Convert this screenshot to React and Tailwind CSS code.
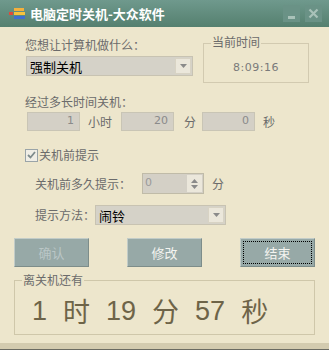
import React from "react";

const cjk = { fontFamily: '"Noto Sans CJK SC", "Noto Sans", sans-serif' };

const Arrow = () => (
  <div className="flex items-center justify-center w-[16px] h-[16px] bg-[#ebe7db] border border-[#d8d3c4]">
    <svg width="7" height="4" viewBox="0 0 7 4">
      <path d="M0 0 L7 0 L3.5 4 Z" fill="#8a8a8a" />
    </svg>
  </div>
);

const Combo = ({ text, className }) => (
  <div
    className={
      "flex items-center justify-between h-[20px] bg-[#d5d2c8] border border-[#c8c3b2] pl-[3px] pr-[1px] " +
      className
    }
  >
    <span className="text-[13px] leading-none text-black" style={cjk}>
      {text}
    </span>
    <Arrow />
  </div>
);

const NumBox = ({ value, className }) => (
  <div
    className={
      "flex items-center justify-end h-[19px] bg-[#d4d0c6] border border-[#c9c5b5] pr-[5px] text-[11px] text-[#8a8a8a] " +
      className
    }
    style={{ fontFamily: '"DejaVu Sans", sans-serif' }}
  >
    {value}
  </div>
);

const Btn = ({ label, disabled, focused }) => (
  <div className="w-[75px] h-[29px] bg-[#97a9a7] border border-t-[#c2ccc8] border-l-[#c2ccc8] border-b-[#7d8d8a] border-r-[#7d8d8a] p-[2px]">
    <div
      className={
        "w-full h-full flex items-center justify-center text-[13px] " +
        (focused ? "border border-dotted border-black " : "") +
        (disabled ? "text-[#bac6c6]" : "text-[#f4f4f0]")
      }
      style={cjk}
    >
      {label}
    </div>
  </div>
);

export default function App() {
  return (
    <div className="w-[329px] h-[350px] bg-[#ede6cc] flex flex-col overflow-hidden select-none" style={cjk}>
      {/* title bar */}
      <div className="h-[27px] flex items-center bg-gradient-to-b from-[#6f998d] to-[#55806f] pl-[9px] pr-[7px]">
        <div className="flex flex-col gap-[1px] w-[16px]">
          <div className="h-[3px] w-[10px] ml-[5px] bg-[#f4b03c]" />
          <div className="flex gap-[1px]">
            <div className="h-[3px] w-[4px] bg-[#e04a3a]" />
            <div className="h-[3px] w-[11px] bg-[#f6c23e]" />
          </div>
          <div className="h-[3px] w-[11px] ml-[5px] bg-[#3f6fd0]" />
        </div>
        <span className="ml-[5px] text-[13px] font-bold text-white whitespace-nowrap">
          电脑定时关机-大众软件
        </span>
        <div className="ml-auto flex gap-[5px]">
          <div className="w-[17px] h-[17px] bg-[#6a9286] flex items-end justify-center pb-[3px]">
            <div className="w-[7px] h-[3px] bg-[#a9c2b9]" />
          </div>
          <div className="w-[17px] h-[17px] bg-[#6a9286] flex items-center justify-center">
            <svg width="11" height="11" viewBox="0 0 11 11">
              <path d="M1.5 1.5 L9.5 9.5 M9.5 1.5 L1.5 9.5" stroke="#a9c2b9" strokeWidth="2.2" />
            </svg>
          </div>
        </div>
      </div>

      {/* body */}
      <div className="flex-1 flex flex-col text-[12px] text-[#6b6b6b] whitespace-nowrap">
        <div className="flex pt-[9px]">
          <div className="ml-[25px] w-[168px]">
            <div className="leading-[18px]">您想让计算机做什么：</div>
            <Combo text="强制关机" className="mt-[2px] w-[167px] ml-[1px]" />
          </div>
          <div className="ml-[10px] mt-[7px] relative w-[106px] h-[40px] border border-[#d2cab0]">
            <span className="absolute -top-[10px] left-[7px] px-[1px] bg-[#ede6cc] leading-[16px]">
              当前时间
            </span>
            <div
              className="pt-[16px] text-center text-[11px] tracking-[0.5px] text-[#7a7a7a]"
              style={{ fontFamily: '"DejaVu Sans", sans-serif' }}
            >
              8:09:16
            </div>
          </div>
        </div>

        <div className="ml-[25px] mt-[10px] leading-[18px]">经过多长时间关机：</div>
        <div className="flex items-center ml-[27px] mt-[1px]">
          <NumBox value="1" className="w-[53px]" />
          <span className="ml-[8px] w-[33px]">小时</span>
          <NumBox value="20" className="w-[53px]" />
          <span className="ml-[10px] w-[18px]">分</span>
          <NumBox value="0" className="w-[53px]" />
          <span className="ml-[8px]">秒</span>
        </div>

        <div className="flex items-center ml-[25px] mt-[16px]">
          <div className="w-[13px] h-[13px] bg-[#f0eee6] border border-[#9aa4a8] flex items-center justify-center">
            <svg width="9" height="8" viewBox="0 0 9 8">
              <path d="M1 4 L3.5 6.5 L8 1" stroke="#7e8b8c" strokeWidth="1.8" fill="none" />
            </svg>
          </div>
          <span className="ml-[1px] leading-[16px]">关机前提示</span>
        </div>

        <div className="flex items-center ml-[35px] mt-[10px]">
          <span className="w-[107px]">关机前多久提示：</span>
          <div className="w-[62px] h-[21px] bg-[#d4d0c6] border border-[#c0bba8] flex items-center justify-between pl-[2px] pr-[1px]">
            <span className="text-[11px] text-[#9a9a9a]" style={{ fontFamily: '"DejaVu Sans", sans-serif' }}>
              0
            </span>
            <div className="w-[15px] h-[17px] bg-[#ebe7db] flex flex-col items-center justify-center gap-[2px]">
              <svg width="7" height="4" viewBox="0 0 7 4">
                <path d="M0 4 L7 4 L3.5 0 Z" fill="#8a8a8a" />
              </svg>
              <svg width="7" height="4" viewBox="0 0 7 4">
                <path d="M0 0 L7 0 L3.5 4 Z" fill="#8a8a8a" />
              </svg>
            </div>
          </div>
          <span className="ml-[8px]">分</span>
        </div>

        <div className="flex items-center ml-[35px] mt-[11px]">
          <span className="w-[60px]">提示方法：</span>
          <Combo text="闹铃" className="w-[131px]" />
        </div>

        <div className="flex justify-between px-[14px] mt-[13px]">
          <Btn label="确认" disabled />
          <Btn label="修改" />
          <Btn label="结束" focused />
        </div>

        <div className="mx-[14px] mt-[13px] relative h-[55px] border border-[#cfc7aa]">
          <span className="absolute -top-[9px] left-[7px] px-[1px] bg-[#ede6cc] leading-[16px]">
            离关机还有
          </span>
          <div className="flex items-center gap-[16px] pl-[17px] pt-[15px] text-[27px] leading-[30px] font-normal text-[#6e6448]">
            <span style={{ fontFamily: '"Liberation Sans", sans-serif' }}>1</span>
            <span>时</span>
            <span style={{ fontFamily: '"Liberation Sans", sans-serif' }}>19</span>
            <span>分</span>
            <span style={{ fontFamily: '"Liberation Sans", sans-serif' }}>57</span>
            <span>秒</span>
          </div>
        </div>

        <div className="mt-auto h-[6px] bg-[#d3cbaf]" />
        <div className="h-[1px] bg-[#6b6b62]" />
      </div>
    </div>
  );
}
